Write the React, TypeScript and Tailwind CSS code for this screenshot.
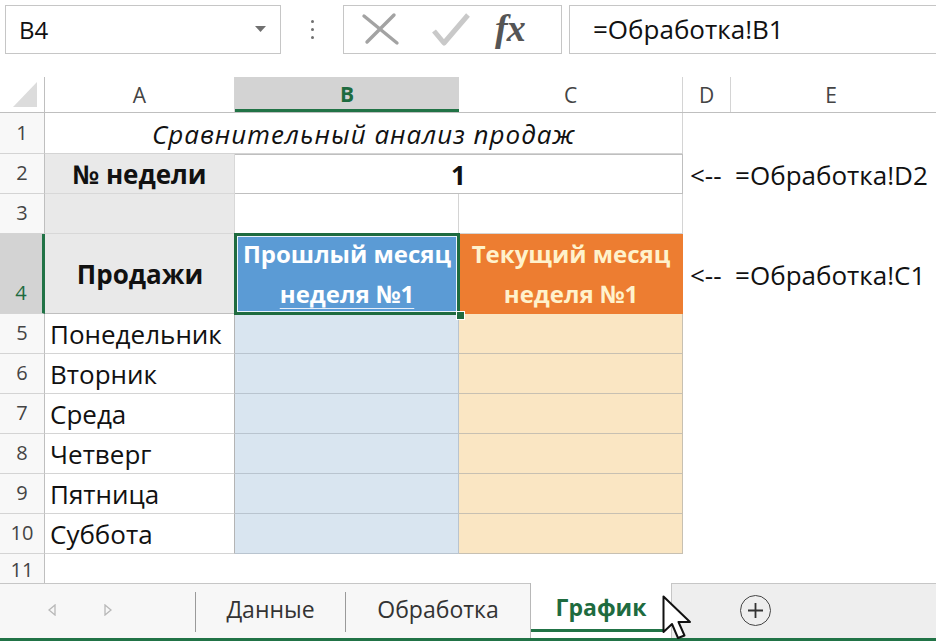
import React from "react";

const F = "font-['Open_Sans',sans-serif]";

function RowHead({ n, sel, h }: { n: string; sel?: boolean; h: string }) {
  return (
    <div
      className={`${h} w-[45px] shrink-0 flex items-end justify-center pb-[5px] text-[20px] border-b border-[#d4d4d4] ${
        sel ? "bg-[#d3d3d3] text-[#1e6b3f] border-r-[3px] border-r-[#217346]" : "bg-[#f8f8f8] text-[#444] border-r border-r-[#bfbfbf]"
      }`}
    >
      {n}
    </div>
  );
}

const days = ["Понедельник", "Вторник", "Среда", "Четверг", "Пятница", "Суббота"];

export default function App() {
  return (
    <div className={`w-[936px] h-[642px] bg-white overflow-hidden relative ${F} text-[#111]`}>
      {/* Formula bar */}
      <div className="h-[77px] flex items-start pt-[5px] pl-[5px]">
        <div className="w-[276px] h-[49px] border border-[#c6c6c6] flex items-center justify-between pl-[13px] pr-[14px] text-[24px]">
          <span>B4</span>
          <svg width="11" height="7" viewBox="0 0 11 7">
            <path d="M0 0 L11 0 L5.5 6 Z" fill="#707070" />
          </svg>
        </div>
        <div className="w-[62px] h-[49px] flex flex-col items-center justify-center gap-[5px]">
          <div className="w-[3px] h-[3px] bg-[#707070] rounded-full" />
          <div className="w-[3px] h-[3px] bg-[#707070] rounded-full" />
          <div className="w-[3px] h-[3px] bg-[#707070] rounded-full" />
        </div>
        <div className="w-[219px] h-[49px] border border-[#c6c6c6] flex items-center">
          <svg width="40" height="36" viewBox="0 0 40 36" className="ml-[17px]">
            <path d="M3 4 L36 31 M33 3 L6 30" stroke="#a3a3a3" strokeWidth="3.4" strokeLinecap="round" fill="none" />
          </svg>
          <svg width="40" height="36" viewBox="0 0 40 36" className="ml-[30px]">
            <path d="M3 19 L13 31 L37 3" stroke="#c9c9c9" strokeWidth="5" strokeLinejoin="round" fill="none" />
          </svg>
          <span className="ml-[24px] font-['Liberation_Serif',serif] italic font-bold text-[38px] leading-none text-[#555] tracking-[-1px] mb-[4px]">
            fx
          </span>
        </div>
        <div className="ml-[7px] flex-1 h-[49px] border border-r-0 border-[#c6c6c6] flex items-center pl-[23px] text-[26px]">
          =Обработка!B1
        </div>
      </div>

      {/* Column headers */}
      <div className="h-[36px] flex border-b border-[#bfbfbf] text-[21px] text-[#444]">
        <div className="w-[45px] shrink-0 border-r border-[#bfbfbf] flex items-end justify-end pr-[7px] pb-[5px]">
          <svg width="24" height="25" viewBox="0 0 24 25">
            <path d="M24 0 L24 25 L0 25 Z" fill="#dcdcdc" />
          </svg>
        </div>
        <div className="w-[190px] shrink-0 border-r border-[#d4d4d4] flex items-center justify-center pt-[2px]">A</div>
        <div className="w-[224px] shrink-0 bg-[#d3d3d3] border-b-[3px] border-[#217346] flex items-center justify-center font-bold text-[#1e6b3f] pt-[4px]">
          B
        </div>
        <div className="w-[224px] shrink-0 border-r border-[#d4d4d4] flex items-center justify-center pt-[2px]">C</div>
        <div className="w-[48px] shrink-0 border-r border-[#d4d4d4] flex items-center justify-center pt-[2px]">D</div>
        <div className="flex-1 flex items-center justify-center pr-[5px] pt-[2px]">E</div>
      </div>

      {/* Row 1 */}
      <div className="flex h-[41px]">
        <RowHead n="1" h="h-[41px]" />
        <div className="w-[638px] shrink-0 border-b border-r border-[#d4d4d4] flex items-center justify-center italic text-[26px] tracking-[1px] pt-[2px]">
          Сравнительный анализ продаж
        </div>
        <div className="flex-1" />
      </div>

      {/* Row 2 */}
      <div className="flex h-[40px]">
        <RowHead n="2" h="h-[40px]" />
        <div className="w-[190px] shrink-0 bg-[#e9e9e9] border-b border-r border-[#d8d8d8] flex items-center justify-center font-bold text-[26px] pt-[2px]">
          № недели
        </div>
        <div className="w-[448px] shrink-0 border border-l-0 border-[#bfbfbf] flex items-center justify-center font-bold text-[26px] pt-[2px]">
          1
        </div>
        <div className="flex-1 flex items-center pl-[7px] text-[26px] whitespace-pre pt-[2px]">
          {"<--  =Обработка!D2"}
        </div>
      </div>

      {/* Row 3 */}
      <div className="flex h-[40px]">
        <RowHead n="3" h="h-[40px]" />
        <div className="w-[190px] shrink-0 bg-[#e9e9e9] border-b border-r border-[#d8d8d8]" />
        <div className="w-[224px] shrink-0 border-b border-r border-[#d4d4d4]" />
        <div className="w-[224px] shrink-0 border-b border-r border-[#d4d4d4]" />
        <div className="flex-1" />
      </div>

      {/* Row 4 */}
      <div className="flex h-[80px]">
        <RowHead n="4" h="h-[80px]" sel />
        <div className="w-[190px] shrink-0 bg-[#e9e9e9] border-b border-[#bfbfbf] flex items-center justify-center font-bold text-[26px] pt-[2px]">
          Продажи
        </div>
        <div className="relative w-[224px] shrink-0 bg-[#5b9bd5] text-white font-bold text-[24px] leading-[40px] text-center">
          <div>Прошлый месяц</div>
          <div className="underline decoration-1 underline-offset-[5px] decoration-[#e6eef8]">неделя №1</div>
          <div className="absolute inset-[-1px] border-[3px] border-[#1e6b3f] pointer-events-none" />
          <div className="absolute inset-[2px] border border-[#e9f3ff] pointer-events-none" />
          <div className="absolute right-[-6px] bottom-[-6px] w-[9px] h-[9px] bg-[#1e6b3f] border border-white" />
        </div>
        <div className="w-[224px] shrink-0 bg-[#ed7d31] text-[#fff2cc] font-bold text-[24px] leading-[40px] text-center">
          <div>Текущий месяц</div>
          <div>неделя №1</div>
        </div>
        <div className="flex-1 flex items-center pl-[7px] text-[26px] whitespace-pre pt-[2px]">
          {"<--  =Обработка!C1"}
        </div>
      </div>

      {/* Rows 5-10 */}
      {days.map((d, i) => (
        <div key={d} className="flex h-[40px]">
          <RowHead n={String(i + 5)} h="h-[40px]" />
          <div className="w-[190px] shrink-0 border-b border-r border-[#d4d4d4] border-r-[#b4b4b4] flex items-center pl-[5px] text-[26px] pt-[2px]">
            {d}
          </div>
          <div className="w-[224px] shrink-0 bg-[#d9e5f0] border-b border-r border-[#b9c4cf]" />
          <div className="w-[224px] shrink-0 bg-[#fae6c3] border-b border-r border-[#c7c0b2]" />
          <div className="flex-1" />
        </div>
      ))}

      {/* Row 11 */}
      <div className="flex h-[30px] border-b border-[#bfbfbf]">
        <div className="w-[45px] shrink-0 h-[30px] bg-[#f8f8f8] border-r border-[#bfbfbf] flex items-start justify-center pt-[3px] text-[20px] leading-[26px] text-[#444] overflow-hidden">
          11
        </div>
        <div className="flex-1" />
      </div>

      {/* Sheet tabs */}
      <div className="h-[55px] flex bg-[#f7f7f7] text-[23px] text-[#333] -mt-[1px]">
        <div className="w-[195px] shrink-0 border-t border-[#c6c6c6] flex items-center">
          <svg width="8" height="12" viewBox="0 0 8 12" className="ml-[48px] mt-[-2px]">
            <path d="M7 1 L1 6 L7 11 Z" fill="none" stroke="#b8b8b8" strokeWidth="1.3" />
          </svg>
          <svg width="8" height="12" viewBox="0 0 8 12" className="ml-[48px] mt-[-2px]">
            <path d="M1 1 L7 6 L1 11 Z" fill="none" stroke="#b8b8b8" strokeWidth="1.3" />
          </svg>
        </div>
        <div className="w-[150px] shrink-0 border-t border-[#c6c6c6] flex items-start">
          <div className="w-[1px] h-[40px] mt-[8px] bg-[#9a9a9a]" />
          <div className="flex-1 h-full flex items-center justify-center pb-[3px]">Данные</div>
        </div>
        <div className="w-[185px] shrink-0 border-t border-[#c6c6c6] flex items-start">
          <div className="w-[1px] h-[40px] mt-[8px] bg-[#9a9a9a]" />
          <div className="flex-1 h-full flex items-center justify-center pb-[3px]">Обработка</div>
        </div>
        <div className="w-[141px] shrink-0 bg-white border-l border-[#b8b8b8] flex flex-col">
          <div className="h-[46px] flex items-center justify-center font-bold text-[#1e6b3f] text-[23px] pt-[3px]">График</div>
          <div className="h-[3px] bg-[#217346] mr-[8px]" />
        </div>
        <div className="flex-1 bg-[#eeeeee] border-t border-l border-[#c6c6c6] flex items-center">
          <div className="ml-[68px] w-[31px] h-[31px] rounded-full border-[1.5px] border-[#444] flex items-center justify-center mb-[2px]">
            <svg width="17" height="17" viewBox="0 0 17 17">
              <path d="M8.5 1 V16 M1 8.5 H16" stroke="#333" strokeWidth="1.8" />
            </svg>
          </div>
        </div>
      </div>
      <div className="h-[3px] bg-[#217346]" />

      {/* Mouse cursor */}
      <svg
        width="40"
        height="52"
        viewBox="0 0 40 52"
        className="absolute left-[662px] top-[595px] pointer-events-none"
      >
        <path
          d="M1.5 1.5 L1.5 37 L10 29 L16 43 L22.5 40.5 L16.5 27 L28 27 Z"
          fill="white"
          stroke="#111"
          strokeWidth="2"
          strokeLinejoin="round"
        />
      </svg>
    </div>
  );
}
